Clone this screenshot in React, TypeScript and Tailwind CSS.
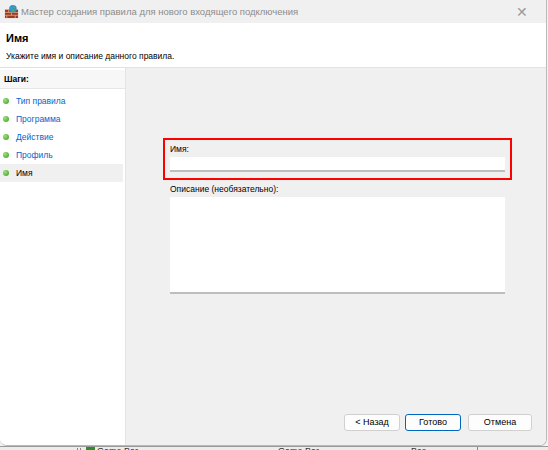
import React from "react";

const steps = ["Тип правила", "Программа", "Действие", "Профиль", "Имя"];

function FirewallIcon() {
  return (
    <svg width="15" height="15" viewBox="0 0 16 16">
      <rect x="1" y="6" width="14" height="9" fill="#9c3b22" />
      <path d="M1 9h14M1 12h14M5 6v3M11 6v3M8 9v3M3 12v3M12 12v3" stroke="#e6b08a" strokeWidth="0.8" />
      <circle cx="9.5" cy="5" r="4" fill="#2f8fd8" />
      <path d="M7 3.5c1 .3 1.5 1.2 1 2.2M10 2c.8.8.4 1.8 1.6 2.4M8.8 7.6c.6-.8 1.6-.6 2-1.4" stroke="#5cb83a" strokeWidth="1.3" fill="none" />
    </svg>
  );
}

function Dot() {
  return (
    <span className="mr-[7px] ml-[3px] inline-block h-[6px] w-[6px] rounded-full bg-[radial-gradient(circle_at_35%_35%,#9be27a,#3a9a1f)]" />
  );
}

function WinButton({ label, primary }: { label: string; primary?: boolean }) {
  return (
    <button
      className={
        "flex h-[17px] w-full items-center justify-center rounded-[3px] border bg-[#fdfdfd] text-[9px] text-black " +
        (primary ? "border-[#0067c0]" : "border-[#d0d0d0]")
      }
    >
      {label}
    </button>
  );
}

export default function App() {
  return (
    <div
      className="relative h-[450px] w-[548px] overflow-hidden bg-[#f3f3f3]"
      style={{ fontFamily: '"Liberation Sans", Arial, sans-serif' }}
    >
      <div className="flex h-[446px] w-[547px] flex-col overflow-hidden rounded-b-[7px] border-r border-b border-[#b9b9b9] bg-white">
        {/* title bar */}
        <div className="flex h-[23px] shrink-0 items-center bg-[#f0f0f0] pl-[4px] pr-[18px]">
          <FirewallIcon />
          <span className="ml-[2px] text-[9.5px] leading-none text-[#8c8c8c]">
            Мастер создания правила для нового входящего подключения
          </span>
          <span className="ml-auto text-[14px] font-light leading-none text-[#9a9a9a]">✕</span>
        </div>

        {/* header */}
        <div className="h-[45px] shrink-0 border-b border-[#e2e2e2] bg-white px-[6px] pt-[7px]">
          <div className="text-[11px] font-bold leading-[16px] text-black">Имя</div>
          <div className="mt-[3px] text-[8.5px] leading-[14px] text-black">
            Укажите имя и описание данного правила.
          </div>
        </div>

        {/* body */}
        <div className="flex min-h-0 flex-1">
          <div className="w-[126px] shrink-0 border-r border-[#e4e4e4] bg-white pt-[2px]">
            <div className="flex h-[19px] items-center border-b border-[#e6e6e6] bg-[#f7f7f7] px-[4px] text-[8.5px] font-bold text-black">
              Шаги:
            </div>
            <div className="mt-[3px]">
              {steps.map((s, i) => {
                const active = i === steps.length - 1;
                return (
                  <div
                    key={s}
                    className={
                      "flex h-[18px] items-center text-[8.5px] " +
                      (active ? "mr-[2px] bg-[#f0f0f0] text-black" : "text-[#0066cc]")
                    }
                  >
                    <Dot />
                    {s}
                  </div>
                );
              })}
            </div>
          </div>

          <div className="flex flex-1 flex-col bg-[#f0f0f0] pb-[14px] pl-[37px] pr-[34px] pt-[70px]">
            <div className="border-2 border-[#ff0000] pb-[6px] pl-[5px] pr-[5px] pt-[2px]">
              <div className="h-[15px] text-[8.5px] leading-[15px] text-black">Имя:</div>
              <div className="h-[15px] border-b-2 border-[#bdbdbd] bg-white" />
            </div>
            <div className="pl-[7px] pr-[7px]">
              <div className="mt-[2px] h-[15px] text-[8.5px] leading-[15px] text-black">
                Описание (необязательно):
              </div>
              <div className="h-[97px] border-b-2 border-[#bdbdbd] bg-white" />
            </div>
            <div className="-mr-[20px] mt-auto flex justify-end gap-[5px]">
              <div className="w-[56px]">
                <WinButton label="< Назад" />
              </div>
              <div className="w-[56px]">
                <WinButton label="Готово" primary />
              </div>
              <div className="ml-[2px] w-[64px]">
                <WinButton label="Отмена" />
              </div>
            </div>
          </div>
        </div>
      </div>

      {/* window behind */}
      <div className="flex h-[4px] items-start border-t border-[#9a9a9a] bg-[#ececec] text-[9px] leading-[9px] text-[#333]">
        <span className="ml-[77px] mt-[1px] h-[3px] w-[4px] border-x border-[#888]" />
        <span className="ml-[5px] h-[4px] w-[9px] bg-[#2e8b2e]" />
        <span className="ml-[2px]">Game Bar</span>
        <span className="ml-[140px]">Game Bar</span>
        <span className="ml-[92px]">Все</span>
        <span className="ml-[50px] h-[4px] w-[1px] bg-[#888]" />
      </div>
    </div>
  );
}
